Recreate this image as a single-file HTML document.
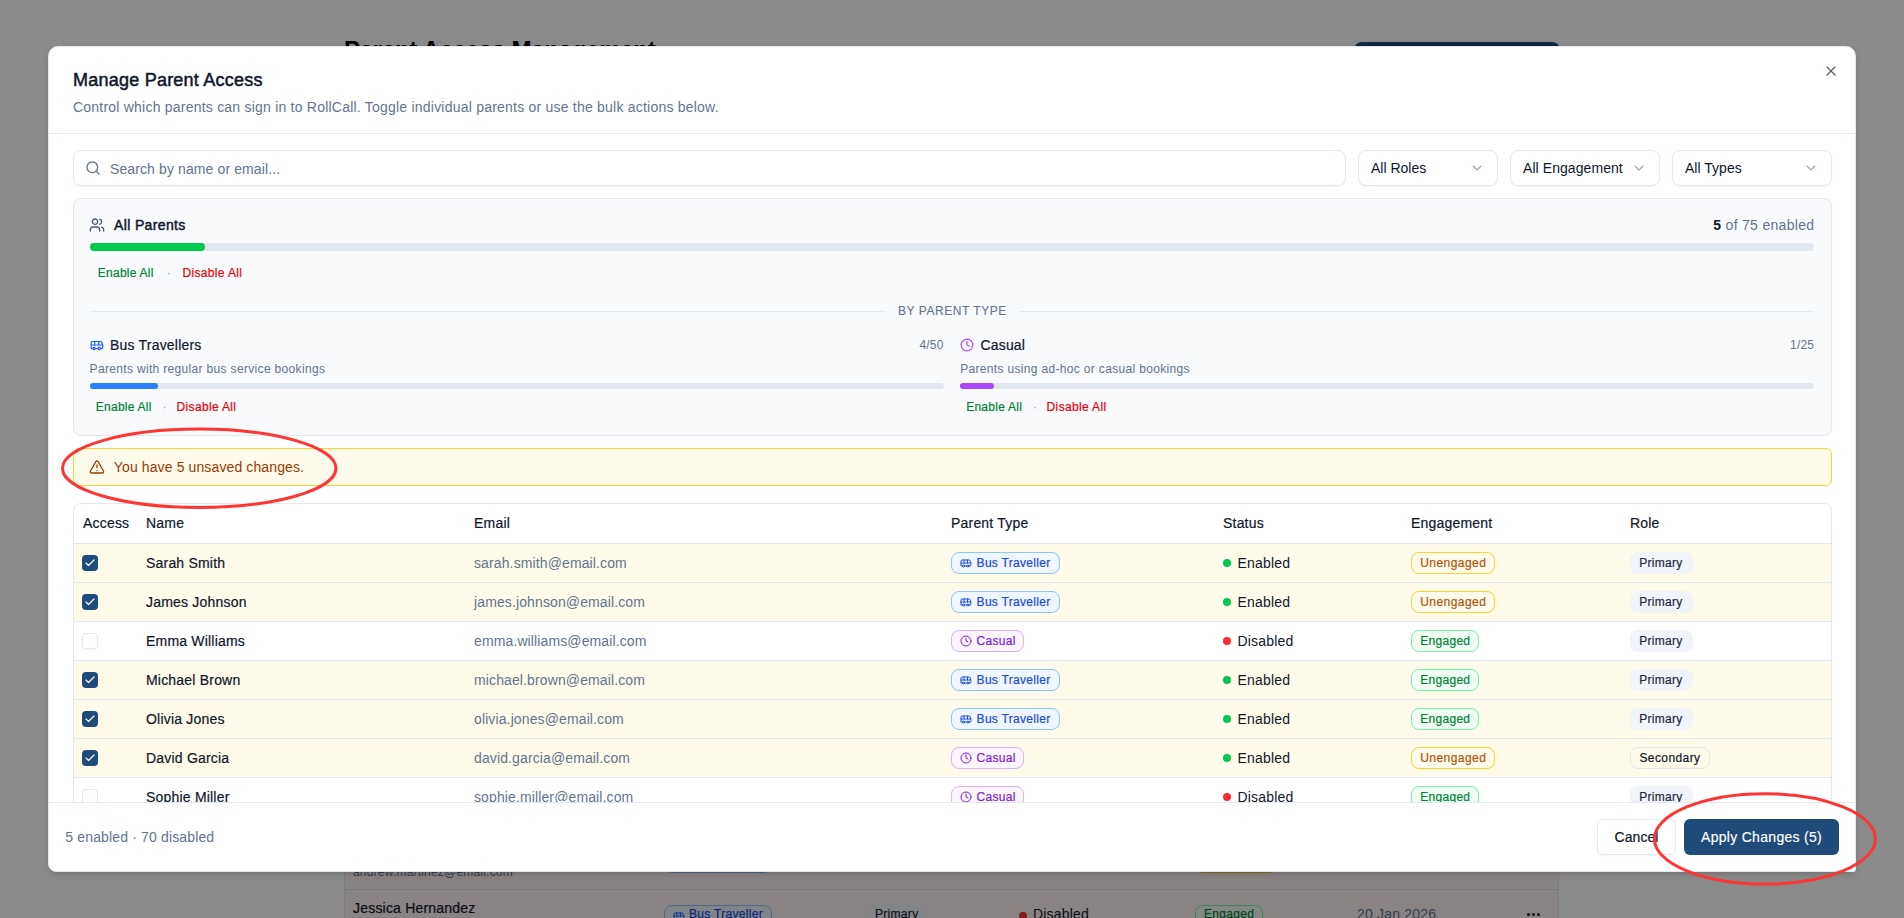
<!DOCTYPE html>
<html><head><meta charset="utf-8">
<style>
*{box-sizing:border-box;margin:0;padding:0}
html,body{width:1904px;height:918px;overflow:hidden;background:#fff;font-family:"Liberation Sans",sans-serif;color:#0f172b}
.abs{position:absolute}
.t{position:absolute;white-space:nowrap}
</style></head>
<body>
<div class="abs" style="left:0;top:0;width:1904px;height:918px;background:#fff"><div class="t" style="left:344px;top:33.5px;font-size:24px;line-height:32px;color:#000;font-weight:700;letter-spacing:-0.27px;">Parent Access Management</div><div class="abs" style="left:1354px;top:42px;width:206px;height:40px;background:#1f4b7b;border-radius:8px"></div><div class="abs" style="left:344px;top:600px;width:1215px;height:400px;background:#fff;border:1px solid #e2e8f0;border-radius:8px"></div><div class="abs" style="left:345px;top:830px;width:1213px;height:100px;background:#fdf3f2"></div><div class="abs" style="left:345px;top:889px;width:1213px;height:1px;background:#d6dde6"></div><div class="t" style="left:353px;top:863.84px;font-size:12px;line-height:16px;color:#62748e;font-weight:400;letter-spacing:0.2px;">andrew.martinez@email.com</div><div class="abs" style="left:664px;top:851px;width:108px;height:22px;border:1px solid #8ec5ff;border-radius:8px;background:#eff6ff"></div><div class="abs" style="left:1195px;top:851px;width:82px;height:22px;border:1px solid #ffd230;border-radius:8px;background:#fffbeb"></div><div class="t" style="left:353px;top:898.15px;font-size:14px;line-height:20px;color:#0f172b;font-weight:400;letter-spacing:0.2px;-webkit-text-stroke:0.2px #0f172b;">Jessica Hernandez</div><div class="abs" style="left:664px;top:905px;width:108px;height:22px;border:1px solid #8ec5ff;border-radius:8px;background:#eff6ff"></div><svg class="abs" style="left:673px;top:910px;" width="12" height="12" viewBox="0 0 24 24" fill="none" stroke="#155dfc" stroke-width="2" stroke-linecap="round" stroke-linejoin="round"><path d="M8 6v6"/><path d="M15 6v6"/><path d="M2 12h19.6"/><path d="M18 18h3s.5-1.7.8-2.8c.1-.4.2-.8.2-1.2 0-.4-.1-.8-.2-1.2l-1.4-5C20.1 6.8 19.1 6 18 6H4a2 2 0 0 0-2 2v10h3"/><circle cx="7" cy="18" r="2"/><path d="M9 18h5"/><circle cx="16" cy="18" r="2"/></svg><div class="t" style="left:689px;top:905.84px;font-size:12px;line-height:16px;color:#1447e6;font-weight:400;letter-spacing:0.3px;-webkit-text-stroke:0.2px #1447e6;">Bus Traveller</div><div class="abs" style="left:866px;top:905px;width:60px;height:22px;background:#f1f5f9;border-radius:8px"></div><div class="t" style="left:875px;top:905.84px;font-size:12px;line-height:16px;color:#1d293d;font-weight:400;letter-spacing:0.3px;-webkit-text-stroke:0.2px #1d293d;">Primary</div><div class="abs" style="left:1019px;top:912px;width:8px;height:8px;background:#fb2c36;border-radius:50%"></div><div class="t" style="left:1033px;top:904.15px;font-size:14px;line-height:20px;color:#0f172b;font-weight:400;letter-spacing:0.2px;">Disabled</div><div class="abs" style="left:1195px;top:905px;width:68px;height:22px;border:1px solid #7bf1a8;border-radius:8px;background:#f0fdf4"></div><div class="t" style="left:1204px;top:905.84px;font-size:12px;line-height:16px;color:#008236;font-weight:400;letter-spacing:0.3px;-webkit-text-stroke:0.2px #008236;">Engaged</div><div class="t" style="left:1357px;top:904.15px;font-size:14px;line-height:20px;color:#62748e;font-weight:400;letter-spacing:0.2px;">20 Jan 2026</div><div class="abs" style="left:1527px;top:913px;width:3px;height:3px;background:#0f172b;border-radius:50%"></div><div class="abs" style="left:1532px;top:913px;width:3px;height:3px;background:#0f172b;border-radius:50%"></div><div class="abs" style="left:1537px;top:913px;width:3px;height:3px;background:#0f172b;border-radius:50%"></div></div><div class="abs" style="left:0;top:0;width:1904px;height:918px;background:rgba(0,0,0,0.46)"></div><div class="abs" style="left:47.6px;top:45.9px;width:1808.8px;height:826.2px;background:#fff;border:1px solid #e2e8f0;border-radius:10px 10px 3px 8px;box-shadow:0 4px 8px -2px rgba(0,0,0,.14),0 2px 4px -2px rgba(0,0,0,.1)"></div><div class="t" style="left:73px;top:65.76px;font-size:18px;line-height:28px;color:#0f172b;font-weight:400;letter-spacing:0.23px;-webkit-text-stroke:0.5px #0f172b;">Manage Parent Access</div><div class="t" style="left:73px;top:97.15px;font-size:14px;line-height:20px;color:#62748e;font-weight:400;letter-spacing:0.22px;">Control which parents can sign in to RollCall. Toggle individual parents or use the bulk actions below.</div><svg class="abs" style="left:1823.4px;top:62.9px;" width="16" height="16" viewBox="0 0 24 24" fill="none" stroke="#525c6b" stroke-width="1.8" stroke-linecap="round" stroke-linejoin="round"><path d="M18 6 6 18"/><path d="m6 6 12 12"/></svg><div class="abs" style="left:48.6px;top:133px;width:1806.8px;height:1px;background:#e2e8f0"></div><div class="abs" style="left:73px;top:150px;width:1273px;height:36px;border:1px solid #e2e8f0;border-radius:8px;background:#fff;box-shadow:0 1px 2px rgba(0,0,0,.04)"></div><svg class="abs" style="left:84.6px;top:160px;" width="16" height="16" viewBox="0 0 24 24" fill="none" stroke="#62748e" stroke-width="2" stroke-linecap="round" stroke-linejoin="round"><circle cx="11" cy="11" r="8"/><path d="m21 21-4.3-4.3"/></svg><div class="t" style="left:110px;top:159.15px;font-size:14px;line-height:20px;color:#62748e;font-weight:400;letter-spacing:0.11px;">Search by name or email...</div><div class="abs" style="left:1358px;top:150px;width:140px;height:36px;border:1px solid #e2e8f0;border-radius:8px;background:#fff;box-shadow:0 1px 2px rgba(0,0,0,.04)"></div><div class="t" style="left:1371px;top:158.15px;font-size:14px;line-height:20px;color:#0f172b;font-weight:400;letter-spacing:0px;">All Roles</div><svg class="abs" style="left:1468.7px;top:160.3px;" width="16" height="16" viewBox="0 0 24 24" fill="none" stroke="#9aa6b8" stroke-width="1.7" stroke-linecap="round" stroke-linejoin="round"><path d="m6 9 6 6 6-6"/></svg><div class="abs" style="left:1510px;top:150px;width:150px;height:36px;border:1px solid #e2e8f0;border-radius:8px;background:#fff;box-shadow:0 1px 2px rgba(0,0,0,.04)"></div><div class="t" style="left:1523px;top:158.15px;font-size:14px;line-height:20px;color:#0f172b;font-weight:400;letter-spacing:0.07px;">All Engagement</div><svg class="abs" style="left:1630.7px;top:160.3px;" width="16" height="16" viewBox="0 0 24 24" fill="none" stroke="#9aa6b8" stroke-width="1.7" stroke-linecap="round" stroke-linejoin="round"><path d="m6 9 6 6 6-6"/></svg><div class="abs" style="left:1672px;top:150px;width:160px;height:36px;border:1px solid #e2e8f0;border-radius:8px;background:#fff;box-shadow:0 1px 2px rgba(0,0,0,.04)"></div><div class="t" style="left:1685px;top:158.15px;font-size:14px;line-height:20px;color:#0f172b;font-weight:400;letter-spacing:0.02px;">All Types</div><svg class="abs" style="left:1802.7px;top:160.3px;" width="16" height="16" viewBox="0 0 24 24" fill="none" stroke="#9aa6b8" stroke-width="1.7" stroke-linecap="round" stroke-linejoin="round"><path d="m6 9 6 6 6-6"/></svg><div class="abs" style="left:73px;top:198px;width:1759px;height:238px;border:1px solid #e2e8f0;border-radius:8px;background:#f8fafc"></div><svg class="abs" style="left:89.1px;top:217px;" width="16" height="16" viewBox="0 0 24 24" fill="none" stroke="#45556c" stroke-width="1.9" stroke-linecap="round" stroke-linejoin="round"><path d="M16 21v-2a4 4 0 0 0-4-4H6a4 4 0 0 0-4 4v2"/><circle cx="9" cy="7" r="4"/><path d="M22 21v-2a4 4 0 0 0-3-3.87"/><path d="M16 3.13a4 4 0 0 1 0 7.75"/></svg><div class="t" style="left:114px;top:215.15px;font-size:14px;line-height:20px;color:#0f172b;font-weight:400;letter-spacing:0.36px;-webkit-text-stroke:0.45px #0f172b;">All Parents</div><div class="t" style="right:89.70000000000005px;top:215.15px;font-size:14px;line-height:20px;color:#62748e;font-weight:400;letter-spacing:0.3px;"><b style="color:#0f172b">5</b> of 75 enabled</div><div class="abs" style="left:89.6px;top:243px;width:1724.8000000000002px;height:8px;background:#e2e8f0;border-radius:4px"></div><div class="abs" style="left:89.6px;top:243px;width:114.99px;height:8px;background:#00c950;border-radius:4px"></div><div class="t" style="left:97.8px;top:264.54px;font-size:12px;line-height:16px;color:#008236;font-weight:400;letter-spacing:0.25px;-webkit-text-stroke:0.2px #008236;">Enable All</div><div class="t" style="left:166.5px;top:264.54px;font-size:12px;line-height:16px;color:#90a1b9;font-weight:400;letter-spacing:0px;">&#183;</div><div class="t" style="left:182.4px;top:264.54px;font-size:12px;line-height:16px;color:#e7000b;font-weight:400;letter-spacing:0.35px;-webkit-text-stroke:0.2px #e7000b;">Disable All</div><div class="abs" style="left:89.6px;top:311px;width:796.0px;height:1px;background:#e2e8f0"></div><div class="abs" style="left:1018.7px;top:311px;width:795.7px;height:1px;background:#e2e8f0"></div><div class="t" style="left:898px;top:302.64px;font-size:12px;line-height:16px;color:#62748e;font-weight:400;letter-spacing:0.55px;-webkit-text-stroke:0.1px #62748e;">BY PARENT TYPE</div><svg class="abs" style="left:89.5px;top:338px;" width="14" height="14" viewBox="0 0 24 24" fill="none" stroke="#155dfc" stroke-width="2" stroke-linecap="round" stroke-linejoin="round"><path d="M8 6v6"/><path d="M15 6v6"/><path d="M2 12h19.6"/><path d="M18 18h3s.5-1.7.8-2.8c.1-.4.2-.8.2-1.2 0-.4-.1-.8-.2-1.2l-1.4-5C20.1 6.8 19.1 6 18 6H4a2 2 0 0 0-2 2v10h3"/><circle cx="7" cy="18" r="2"/><path d="M9 18h5"/><circle cx="16" cy="18" r="2"/></svg><div class="t" style="left:110px;top:335.15px;font-size:14px;line-height:20px;color:#0f172b;font-weight:400;letter-spacing:0.2px;-webkit-text-stroke:0.2px #0f172b;">Bus Travellers</div><div class="t" style="right:960.4px;top:337.34px;font-size:12px;line-height:16px;color:#62748e;font-weight:400;letter-spacing:0.2px;">4/50</div><div class="t" style="left:89.6px;top:360.84px;font-size:12px;line-height:16px;color:#62748e;font-weight:400;letter-spacing:0.33px;">Parents with regular bus service bookings</div><div class="abs" style="left:89.6px;top:383px;width:854.4000000000001px;height:6px;background:#e2e8f0;border-radius:3px"></div><div class="abs" style="left:89.6px;top:383px;width:68.35px;height:6px;background:#2b7fff;border-radius:3px"></div><div class="t" style="left:95.8px;top:398.84px;font-size:12px;line-height:16px;color:#008236;font-weight:400;letter-spacing:0.25px;-webkit-text-stroke:0.2px #008236;">Enable All</div><div class="t" style="left:162.5px;top:398.84px;font-size:12px;line-height:16px;color:#90a1b9;font-weight:400;letter-spacing:0px;">&#183;</div><div class="t" style="left:176.5px;top:398.84px;font-size:12px;line-height:16px;color:#e7000b;font-weight:400;letter-spacing:0.35px;-webkit-text-stroke:0.2px #e7000b;">Disable All</div><svg class="abs" style="left:959.5px;top:338px;" width="14" height="14" viewBox="0 0 24 24" fill="none" stroke="#ad46ff" stroke-width="2" stroke-linecap="round" stroke-linejoin="round"><circle cx="12" cy="12" r="10"/><path d="M12 6v6l4 2"/></svg><div class="t" style="left:980.4px;top:335.15px;font-size:14px;line-height:20px;color:#0f172b;font-weight:400;letter-spacing:0.2px;-webkit-text-stroke:0.2px #0f172b;">Casual</div><div class="t" style="right:89.79999999999995px;top:337.34px;font-size:12px;line-height:16px;color:#62748e;font-weight:400;letter-spacing:0.2px;">1/25</div><div class="t" style="left:960.2px;top:360.84px;font-size:12px;line-height:16px;color:#62748e;font-weight:400;letter-spacing:0.33px;">Parents using ad-hoc or casual bookings</div><div class="abs" style="left:960.0000000000001px;top:383px;width:854.4000000000001px;height:6px;background:#e2e8f0;border-radius:3px"></div><div class="abs" style="left:960.0000000000001px;top:383px;width:34.18px;height:6px;background:#ad46ff;border-radius:3px"></div><div class="t" style="left:966.2px;top:398.84px;font-size:12px;line-height:16px;color:#008236;font-weight:400;letter-spacing:0.25px;-webkit-text-stroke:0.2px #008236;">Enable All</div><div class="t" style="left:1033px;top:398.84px;font-size:12px;line-height:16px;color:#90a1b9;font-weight:400;letter-spacing:0px;">&#183;</div><div class="t" style="left:1046.6px;top:398.84px;font-size:12px;line-height:16px;color:#e7000b;font-weight:400;letter-spacing:0.35px;-webkit-text-stroke:0.2px #e7000b;">Disable All</div><div class="abs" style="left:73px;top:448px;width:1759px;height:38px;border:1px solid #ffd230;border-radius:6px;background:#fffbeb"></div><svg class="abs" style="left:89.0px;top:459px;" width="16" height="16" viewBox="0 0 24 24" fill="none" stroke="#973c00" stroke-width="1.9" stroke-linecap="round" stroke-linejoin="round"><path d="m21.73 18-8-14a2 2 0 0 0-3.48 0l-8 14A2 2 0 0 0 4 21h16a2 2 0 0 0 1.73-3"/><path d="M12 9v4"/><path d="M12 17h.01"/></svg><div class="t" style="left:113.8px;top:457.15px;font-size:14px;line-height:20px;color:#973c00;font-weight:400;letter-spacing:0.12px;">You have 5 unsaved changes.</div><div class="abs" style="left:0;top:0;width:1904px;height:802px;overflow:hidden"><div class="abs" style="left:73px;top:502.5px;width:1759px;height:500px;border:1px solid #e2e8f0;border-radius:8px;background:#fff"></div><div class="t" style="left:83px;top:513.15px;font-size:14px;line-height:20px;color:#0f172b;font-weight:400;letter-spacing:0.2px;-webkit-text-stroke:0.2px #0f172b;">Access</div><div class="t" style="left:146px;top:513.15px;font-size:14px;line-height:20px;color:#0f172b;font-weight:400;letter-spacing:0.2px;-webkit-text-stroke:0.2px #0f172b;">Name</div><div class="t" style="left:474px;top:513.15px;font-size:14px;line-height:20px;color:#0f172b;font-weight:400;letter-spacing:0.2px;-webkit-text-stroke:0.2px #0f172b;">Email</div><div class="t" style="left:951px;top:513.15px;font-size:14px;line-height:20px;color:#0f172b;font-weight:400;letter-spacing:0.2px;-webkit-text-stroke:0.2px #0f172b;">Parent Type</div><div class="t" style="left:1223px;top:513.15px;font-size:14px;line-height:20px;color:#0f172b;font-weight:400;letter-spacing:0.2px;-webkit-text-stroke:0.2px #0f172b;">Status</div><div class="t" style="left:1411px;top:513.15px;font-size:14px;line-height:20px;color:#0f172b;font-weight:400;letter-spacing:0.2px;-webkit-text-stroke:0.2px #0f172b;">Engagement</div><div class="t" style="left:1630px;top:513.15px;font-size:14px;line-height:20px;color:#0f172b;font-weight:400;letter-spacing:0.2px;-webkit-text-stroke:0.2px #0f172b;">Role</div><div class="abs" style="left:74px;top:543px;width:1757px;height:1px;background:#e2e8f0"></div><div class="abs" style="left:74px;top:544px;width:1757px;height:38px;background:#fffbeb"></div><div class="abs" style="left:74px;top:582px;width:1757px;height:1px;background:#e2e8f0"></div><div class="abs" style="left:82.2px;top:555px;width:16px;height:16px;background:#1f4b7b;border-radius:4px"></div><svg class="abs" style="left:84.2px;top:557.2px;" width="12" height="12" viewBox="0 0 24 24" fill="none" stroke="#fff" stroke-width="2.4" stroke-linecap="round" stroke-linejoin="round"><path d="M20 6 9 17l-5-5"/></svg><div class="t" style="left:146px;top:553.15px;font-size:14px;line-height:20px;color:#0f172b;font-weight:400;letter-spacing:0.2px;-webkit-text-stroke:0.2px #0f172b;">Sarah Smith</div><div class="t" style="left:474px;top:553.15px;font-size:14px;line-height:20px;color:#62748e;font-weight:400;letter-spacing:0.12px;">sarah.smith@email.com</div><div class="abs" style="left:951px;top:552px;width:109px;height:22px;border:1px solid #8ec5ff;border-radius:8px;background:#eff6ff"></div><svg class="abs" style="left:960px;top:557px;" width="12" height="12" viewBox="0 0 24 24" fill="none" stroke="#1d4ed8" stroke-width="2" stroke-linecap="round" stroke-linejoin="round"><path d="M8 6v6"/><path d="M15 6v6"/><path d="M2 12h19.6"/><path d="M18 18h3s.5-1.7.8-2.8c.1-.4.2-.8.2-1.2 0-.4-.1-.8-.2-1.2l-1.4-5C20.1 6.8 19.1 6 18 6H4a2 2 0 0 0-2 2v10h3"/><circle cx="7" cy="18" r="2"/><path d="M9 18h5"/><circle cx="16" cy="18" r="2"/></svg><div class="t" style="left:976.6px;top:555.14px;font-size:12px;line-height:16px;color:#1a4bd9;font-weight:400;letter-spacing:0.3px;-webkit-text-stroke:0.2px #1a4bd9;">Bus Traveller</div><div class="abs" style="left:1223px;top:559px;width:8px;height:8px;background:#00c950;border-radius:50%"></div><div class="t" style="left:1237.4px;top:553.15px;font-size:14px;line-height:20px;color:#0f172b;font-weight:400;letter-spacing:0.2px;">Enabled</div><div class="abs" style="left:1411px;top:552px;width:84px;height:22px;border:1px solid #ffd230;border-radius:8px;background:#fffbeb"></div><div class="t" style="left:1420.2px;top:555.14px;font-size:12px;line-height:16px;color:#b45309;font-weight:400;letter-spacing:0.45px;-webkit-text-stroke:0.2px #b45309;">Unengaged</div><div class="abs" style="left:1630px;top:552px;width:63px;height:22px;background:#f1f5f9;border-radius:8px"></div><div class="t" style="left:1639.2px;top:555.14px;font-size:12px;line-height:16px;color:#1d293d;font-weight:400;letter-spacing:0.3px;-webkit-text-stroke:0.2px #1d293d;">Primary</div><div class="abs" style="left:74px;top:583px;width:1757px;height:38px;background:#fffbeb"></div><div class="abs" style="left:74px;top:621px;width:1757px;height:1px;background:#e2e8f0"></div><div class="abs" style="left:82.2px;top:594px;width:16px;height:16px;background:#1f4b7b;border-radius:4px"></div><svg class="abs" style="left:84.2px;top:596.2px;" width="12" height="12" viewBox="0 0 24 24" fill="none" stroke="#fff" stroke-width="2.4" stroke-linecap="round" stroke-linejoin="round"><path d="M20 6 9 17l-5-5"/></svg><div class="t" style="left:146px;top:592.15px;font-size:14px;line-height:20px;color:#0f172b;font-weight:400;letter-spacing:0.2px;-webkit-text-stroke:0.2px #0f172b;">James Johnson</div><div class="t" style="left:474px;top:592.15px;font-size:14px;line-height:20px;color:#62748e;font-weight:400;letter-spacing:0.12px;">james.johnson@email.com</div><div class="abs" style="left:951px;top:591px;width:109px;height:22px;border:1px solid #8ec5ff;border-radius:8px;background:#eff6ff"></div><svg class="abs" style="left:960px;top:596px;" width="12" height="12" viewBox="0 0 24 24" fill="none" stroke="#1d4ed8" stroke-width="2" stroke-linecap="round" stroke-linejoin="round"><path d="M8 6v6"/><path d="M15 6v6"/><path d="M2 12h19.6"/><path d="M18 18h3s.5-1.7.8-2.8c.1-.4.2-.8.2-1.2 0-.4-.1-.8-.2-1.2l-1.4-5C20.1 6.8 19.1 6 18 6H4a2 2 0 0 0-2 2v10h3"/><circle cx="7" cy="18" r="2"/><path d="M9 18h5"/><circle cx="16" cy="18" r="2"/></svg><div class="t" style="left:976.6px;top:594.14px;font-size:12px;line-height:16px;color:#1a4bd9;font-weight:400;letter-spacing:0.3px;-webkit-text-stroke:0.2px #1a4bd9;">Bus Traveller</div><div class="abs" style="left:1223px;top:598px;width:8px;height:8px;background:#00c950;border-radius:50%"></div><div class="t" style="left:1237.4px;top:592.15px;font-size:14px;line-height:20px;color:#0f172b;font-weight:400;letter-spacing:0.2px;">Enabled</div><div class="abs" style="left:1411px;top:591px;width:84px;height:22px;border:1px solid #ffd230;border-radius:8px;background:#fffbeb"></div><div class="t" style="left:1420.2px;top:594.14px;font-size:12px;line-height:16px;color:#b45309;font-weight:400;letter-spacing:0.45px;-webkit-text-stroke:0.2px #b45309;">Unengaged</div><div class="abs" style="left:1630px;top:591px;width:63px;height:22px;background:#f1f5f9;border-radius:8px"></div><div class="t" style="left:1639.2px;top:594.14px;font-size:12px;line-height:16px;color:#1d293d;font-weight:400;letter-spacing:0.3px;-webkit-text-stroke:0.2px #1d293d;">Primary</div><div class="abs" style="left:74px;top:660px;width:1757px;height:1px;background:#e2e8f0"></div><div class="abs" style="left:82.2px;top:633px;width:16px;height:16px;background:#fff;border:1px solid #e2e8f0;border-radius:4px;box-shadow:0 1px 2px rgba(0,0,0,.05)"></div><div class="t" style="left:146px;top:631.15px;font-size:14px;line-height:20px;color:#0f172b;font-weight:400;letter-spacing:0.2px;-webkit-text-stroke:0.2px #0f172b;">Emma Williams</div><div class="t" style="left:474px;top:631.15px;font-size:14px;line-height:20px;color:#62748e;font-weight:400;letter-spacing:0.12px;">emma.williams@email.com</div><div class="abs" style="left:951px;top:630px;width:73px;height:22px;border:1px solid #dab2ff;border-radius:8px;background:#faf5ff"></div><svg class="abs" style="left:960px;top:635px;" width="12" height="12" viewBox="0 0 24 24" fill="none" stroke="#7e22ce" stroke-width="2" stroke-linecap="round" stroke-linejoin="round"><circle cx="12" cy="12" r="10"/><path d="M12 6v6l4 2"/></svg><div class="t" style="left:976.6px;top:633.14px;font-size:12px;line-height:16px;color:#7e22ce;font-weight:400;letter-spacing:0.3px;-webkit-text-stroke:0.2px #7e22ce;">Casual</div><div class="abs" style="left:1223px;top:637px;width:8px;height:8px;background:#fb2c36;border-radius:50%"></div><div class="t" style="left:1237.4px;top:631.15px;font-size:14px;line-height:20px;color:#0f172b;font-weight:400;letter-spacing:0.2px;">Disabled</div><div class="abs" style="left:1411px;top:630px;width:68px;height:22px;border:1px solid #7bf1a8;border-radius:8px;background:#f0fdf4"></div><div class="t" style="left:1420.2px;top:633.14px;font-size:12px;line-height:16px;color:#008236;font-weight:400;letter-spacing:0.3px;-webkit-text-stroke:0.2px #008236;">Engaged</div><div class="abs" style="left:1630px;top:630px;width:63px;height:22px;background:#f1f5f9;border-radius:8px"></div><div class="t" style="left:1639.2px;top:633.14px;font-size:12px;line-height:16px;color:#1d293d;font-weight:400;letter-spacing:0.3px;-webkit-text-stroke:0.2px #1d293d;">Primary</div><div class="abs" style="left:74px;top:661px;width:1757px;height:38px;background:#fffbeb"></div><div class="abs" style="left:74px;top:699px;width:1757px;height:1px;background:#e2e8f0"></div><div class="abs" style="left:82.2px;top:672px;width:16px;height:16px;background:#1f4b7b;border-radius:4px"></div><svg class="abs" style="left:84.2px;top:674.2px;" width="12" height="12" viewBox="0 0 24 24" fill="none" stroke="#fff" stroke-width="2.4" stroke-linecap="round" stroke-linejoin="round"><path d="M20 6 9 17l-5-5"/></svg><div class="t" style="left:146px;top:670.15px;font-size:14px;line-height:20px;color:#0f172b;font-weight:400;letter-spacing:0.2px;-webkit-text-stroke:0.2px #0f172b;">Michael Brown</div><div class="t" style="left:474px;top:670.15px;font-size:14px;line-height:20px;color:#62748e;font-weight:400;letter-spacing:0.12px;">michael.brown@email.com</div><div class="abs" style="left:951px;top:669px;width:109px;height:22px;border:1px solid #8ec5ff;border-radius:8px;background:#eff6ff"></div><svg class="abs" style="left:960px;top:674px;" width="12" height="12" viewBox="0 0 24 24" fill="none" stroke="#1d4ed8" stroke-width="2" stroke-linecap="round" stroke-linejoin="round"><path d="M8 6v6"/><path d="M15 6v6"/><path d="M2 12h19.6"/><path d="M18 18h3s.5-1.7.8-2.8c.1-.4.2-.8.2-1.2 0-.4-.1-.8-.2-1.2l-1.4-5C20.1 6.8 19.1 6 18 6H4a2 2 0 0 0-2 2v10h3"/><circle cx="7" cy="18" r="2"/><path d="M9 18h5"/><circle cx="16" cy="18" r="2"/></svg><div class="t" style="left:976.6px;top:672.14px;font-size:12px;line-height:16px;color:#1a4bd9;font-weight:400;letter-spacing:0.3px;-webkit-text-stroke:0.2px #1a4bd9;">Bus Traveller</div><div class="abs" style="left:1223px;top:676px;width:8px;height:8px;background:#00c950;border-radius:50%"></div><div class="t" style="left:1237.4px;top:670.15px;font-size:14px;line-height:20px;color:#0f172b;font-weight:400;letter-spacing:0.2px;">Enabled</div><div class="abs" style="left:1411px;top:669px;width:68px;height:22px;border:1px solid #7bf1a8;border-radius:8px;background:#f0fdf4"></div><div class="t" style="left:1420.2px;top:672.14px;font-size:12px;line-height:16px;color:#008236;font-weight:400;letter-spacing:0.3px;-webkit-text-stroke:0.2px #008236;">Engaged</div><div class="abs" style="left:1630px;top:669px;width:63px;height:22px;background:#f1f5f9;border-radius:8px"></div><div class="t" style="left:1639.2px;top:672.14px;font-size:12px;line-height:16px;color:#1d293d;font-weight:400;letter-spacing:0.3px;-webkit-text-stroke:0.2px #1d293d;">Primary</div><div class="abs" style="left:74px;top:700px;width:1757px;height:38px;background:#fffbeb"></div><div class="abs" style="left:74px;top:738px;width:1757px;height:1px;background:#e2e8f0"></div><div class="abs" style="left:82.2px;top:711px;width:16px;height:16px;background:#1f4b7b;border-radius:4px"></div><svg class="abs" style="left:84.2px;top:713.2px;" width="12" height="12" viewBox="0 0 24 24" fill="none" stroke="#fff" stroke-width="2.4" stroke-linecap="round" stroke-linejoin="round"><path d="M20 6 9 17l-5-5"/></svg><div class="t" style="left:146px;top:709.15px;font-size:14px;line-height:20px;color:#0f172b;font-weight:400;letter-spacing:0.2px;-webkit-text-stroke:0.2px #0f172b;">Olivia Jones</div><div class="t" style="left:474px;top:709.15px;font-size:14px;line-height:20px;color:#62748e;font-weight:400;letter-spacing:0.12px;">olivia.jones@email.com</div><div class="abs" style="left:951px;top:708px;width:109px;height:22px;border:1px solid #8ec5ff;border-radius:8px;background:#eff6ff"></div><svg class="abs" style="left:960px;top:713px;" width="12" height="12" viewBox="0 0 24 24" fill="none" stroke="#1d4ed8" stroke-width="2" stroke-linecap="round" stroke-linejoin="round"><path d="M8 6v6"/><path d="M15 6v6"/><path d="M2 12h19.6"/><path d="M18 18h3s.5-1.7.8-2.8c.1-.4.2-.8.2-1.2 0-.4-.1-.8-.2-1.2l-1.4-5C20.1 6.8 19.1 6 18 6H4a2 2 0 0 0-2 2v10h3"/><circle cx="7" cy="18" r="2"/><path d="M9 18h5"/><circle cx="16" cy="18" r="2"/></svg><div class="t" style="left:976.6px;top:711.14px;font-size:12px;line-height:16px;color:#1a4bd9;font-weight:400;letter-spacing:0.3px;-webkit-text-stroke:0.2px #1a4bd9;">Bus Traveller</div><div class="abs" style="left:1223px;top:715px;width:8px;height:8px;background:#00c950;border-radius:50%"></div><div class="t" style="left:1237.4px;top:709.15px;font-size:14px;line-height:20px;color:#0f172b;font-weight:400;letter-spacing:0.2px;">Enabled</div><div class="abs" style="left:1411px;top:708px;width:68px;height:22px;border:1px solid #7bf1a8;border-radius:8px;background:#f0fdf4"></div><div class="t" style="left:1420.2px;top:711.14px;font-size:12px;line-height:16px;color:#008236;font-weight:400;letter-spacing:0.3px;-webkit-text-stroke:0.2px #008236;">Engaged</div><div class="abs" style="left:1630px;top:708px;width:63px;height:22px;background:#f1f5f9;border-radius:8px"></div><div class="t" style="left:1639.2px;top:711.14px;font-size:12px;line-height:16px;color:#1d293d;font-weight:400;letter-spacing:0.3px;-webkit-text-stroke:0.2px #1d293d;">Primary</div><div class="abs" style="left:74px;top:739px;width:1757px;height:38px;background:#fffbeb"></div><div class="abs" style="left:74px;top:777px;width:1757px;height:1px;background:#e2e8f0"></div><div class="abs" style="left:82.2px;top:750px;width:16px;height:16px;background:#1f4b7b;border-radius:4px"></div><svg class="abs" style="left:84.2px;top:752.2px;" width="12" height="12" viewBox="0 0 24 24" fill="none" stroke="#fff" stroke-width="2.4" stroke-linecap="round" stroke-linejoin="round"><path d="M20 6 9 17l-5-5"/></svg><div class="t" style="left:146px;top:748.15px;font-size:14px;line-height:20px;color:#0f172b;font-weight:400;letter-spacing:0.2px;-webkit-text-stroke:0.2px #0f172b;">David Garcia</div><div class="t" style="left:474px;top:748.15px;font-size:14px;line-height:20px;color:#62748e;font-weight:400;letter-spacing:0.12px;">david.garcia@email.com</div><div class="abs" style="left:951px;top:747px;width:73px;height:22px;border:1px solid #dab2ff;border-radius:8px;background:#faf5ff"></div><svg class="abs" style="left:960px;top:752px;" width="12" height="12" viewBox="0 0 24 24" fill="none" stroke="#7e22ce" stroke-width="2" stroke-linecap="round" stroke-linejoin="round"><circle cx="12" cy="12" r="10"/><path d="M12 6v6l4 2"/></svg><div class="t" style="left:976.6px;top:750.14px;font-size:12px;line-height:16px;color:#7e22ce;font-weight:400;letter-spacing:0.3px;-webkit-text-stroke:0.2px #7e22ce;">Casual</div><div class="abs" style="left:1223px;top:754px;width:8px;height:8px;background:#00c950;border-radius:50%"></div><div class="t" style="left:1237.4px;top:748.15px;font-size:14px;line-height:20px;color:#0f172b;font-weight:400;letter-spacing:0.2px;">Enabled</div><div class="abs" style="left:1411px;top:747px;width:84px;height:22px;border:1px solid #ffd230;border-radius:8px;background:#fffbeb"></div><div class="t" style="left:1420.2px;top:750.14px;font-size:12px;line-height:16px;color:#b45309;font-weight:400;letter-spacing:0.45px;-webkit-text-stroke:0.2px #b45309;">Unengaged</div><div class="abs" style="left:1630px;top:747px;width:80px;height:22px;border:1px solid #e2e8f0;border-radius:8px"></div><div class="t" style="left:1639.4px;top:750.14px;font-size:12px;line-height:16px;color:#0f172b;font-weight:400;letter-spacing:0.42px;-webkit-text-stroke:0.2px #0f172b;">Secondary</div><div class="abs" style="left:74px;top:816px;width:1757px;height:1px;background:#e2e8f0"></div><div class="abs" style="left:82.2px;top:789px;width:16px;height:16px;background:#fff;border:1px solid #e2e8f0;border-radius:4px;box-shadow:0 1px 2px rgba(0,0,0,.05)"></div><div class="t" style="left:146px;top:787.15px;font-size:14px;line-height:20px;color:#0f172b;font-weight:400;letter-spacing:0.2px;-webkit-text-stroke:0.2px #0f172b;">Sophie Miller</div><div class="t" style="left:474px;top:787.15px;font-size:14px;line-height:20px;color:#62748e;font-weight:400;letter-spacing:0.12px;">sophie.miller@email.com</div><div class="abs" style="left:951px;top:786px;width:73px;height:22px;border:1px solid #dab2ff;border-radius:8px;background:#faf5ff"></div><svg class="abs" style="left:960px;top:791px;" width="12" height="12" viewBox="0 0 24 24" fill="none" stroke="#7e22ce" stroke-width="2" stroke-linecap="round" stroke-linejoin="round"><circle cx="12" cy="12" r="10"/><path d="M12 6v6l4 2"/></svg><div class="t" style="left:976.6px;top:789.14px;font-size:12px;line-height:16px;color:#7e22ce;font-weight:400;letter-spacing:0.3px;-webkit-text-stroke:0.2px #7e22ce;">Casual</div><div class="abs" style="left:1223px;top:793px;width:8px;height:8px;background:#fb2c36;border-radius:50%"></div><div class="t" style="left:1237.4px;top:787.15px;font-size:14px;line-height:20px;color:#0f172b;font-weight:400;letter-spacing:0.2px;">Disabled</div><div class="abs" style="left:1411px;top:786px;width:68px;height:22px;border:1px solid #7bf1a8;border-radius:8px;background:#f0fdf4"></div><div class="t" style="left:1420.2px;top:789.14px;font-size:12px;line-height:16px;color:#008236;font-weight:400;letter-spacing:0.3px;-webkit-text-stroke:0.2px #008236;">Engaged</div><div class="abs" style="left:1630px;top:786px;width:63px;height:22px;background:#f1f5f9;border-radius:8px"></div><div class="t" style="left:1639.2px;top:789.14px;font-size:12px;line-height:16px;color:#1d293d;font-weight:400;letter-spacing:0.3px;-webkit-text-stroke:0.2px #1d293d;">Primary</div></div><div class="abs" style="left:48.6px;top:802px;width:1806.8px;height:1px;background:#e2e8f0"></div><div class="t" style="left:65.3px;top:827.15px;font-size:14px;line-height:20px;color:#62748e;font-weight:400;letter-spacing:0.15px;">5 enabled &#183; 70 disabled</div><div class="abs" style="left:1597.4px;top:819px;width:79px;height:36px;border:1px solid #e2e8f0;border-radius:6px;background:#fff;box-shadow:0 1px 2px rgba(0,0,0,.04)"></div><div class="t" style="left:1614.6px;top:827.15px;font-size:14px;line-height:20px;color:#0f172b;font-weight:400;letter-spacing:0.05px;-webkit-text-stroke:0.2px #0f172b;">Cancel</div><div class="abs" style="left:1684.4px;top:819px;width:155px;height:36px;background:#1f4b7b;border-radius:6px"></div><div class="t" style="left:1701px;top:827.15px;font-size:14px;line-height:20px;color:#fff;font-weight:400;letter-spacing:0.3px;-webkit-text-stroke:0.15px #fff;">Apply Changes (5)</div><svg class="abs" style="left:0;top:0" width="1904" height="918" viewBox="0 0 1904 918"><ellipse cx="199.2" cy="468.3" rx="136.7" ry="39.2" fill="none" stroke="#ff3535" stroke-width="3"/><ellipse cx="1764.9" cy="838.9" rx="110.5" ry="45.2" fill="none" stroke="#ff3535" stroke-width="3"/></svg></body></html>
